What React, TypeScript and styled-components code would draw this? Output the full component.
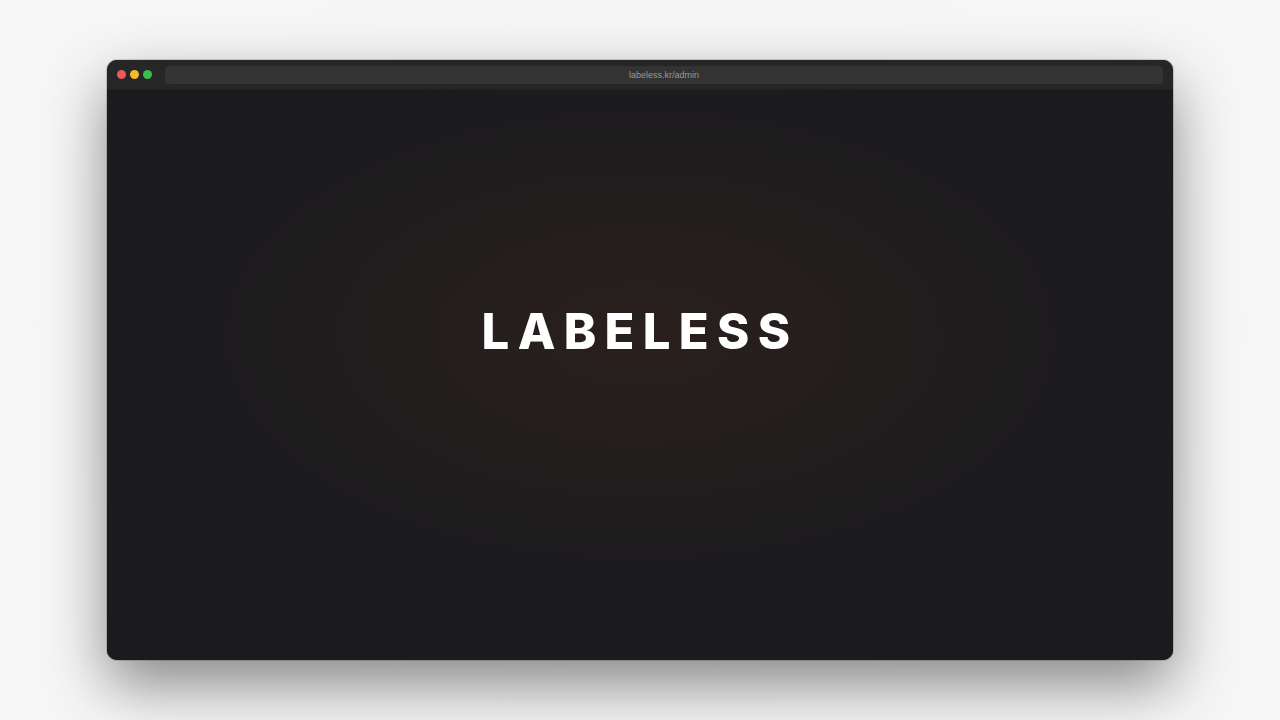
import React from "react";
import styled, { createGlobalStyle } from "styled-components";

const Global = createGlobalStyle`
  html, body { margin: 0; padding: 0; }
  body {
    width: 1280px;
    height: 720px;
    overflow: hidden;
    background: #f4f4f4;
    font-family: "Liberation Sans", Arial, sans-serif;
  }
`;

const Stage = styled.div`
  width: 1280px;
  height: 720px;
  display: flex;
  align-items: center;
  justify-content: center;
  background: radial-gradient(ellipse at 50% 45%, #f2f2f2 0%, #f6f6f6 70%);
`;

const Window = styled.div`
  width: 1066px;
  height: 600px;
  border-radius: 10px;
  overflow: hidden;
  display: flex;
  flex-direction: column;
  background: #1b1b1d;
  box-shadow: 0 25px 60px rgba(0, 0, 0, 0.45), 0 0 0 1px rgba(0, 0, 0, 0.15);
`;

const TitleBar = styled.div`
  height: 29px;
  flex: none;
  display: flex;
  align-items: center;
  padding: 0 10px 0 10px;
  background: #262627;
  border-bottom: 1px solid #202021;
`;

const Dots = styled.div`
  display: flex;
  gap: 4px;
  margin-right: 13px;
`;

const Dot = styled.span<{ $c: string }>`
  width: 9px;
  height: 9px;
  border-radius: 50%;
  background: ${(p) => p.$c};
`;

const Address = styled.div`
  flex: 1;
  height: 18px;
  border-radius: 4px;
  background: #333334;
  display: flex;
  align-items: center;
  justify-content: center;
  font-size: 9px;
  color: #9a9a9a;
  font-family: "Liberation Sans", Arial, sans-serif;
`;

const Body = styled.div`
  flex: 1;
  display: flex;
  align-items: center;
  justify-content: center;
  padding-bottom: 87px;
  background: radial-gradient(
    ellipse 520px 280px at 50% 43%,
    #2a201d 0%,
    #241e1d 35%,
    #1e1c1d 70%,
    #1b1b1d 100%
  );
`;

const Logo = styled.h1`
  margin: 0;
  font-family: Inter, "Liberation Sans", Arial, sans-serif;
  font-weight: 800;
  font-size: 49px;
  line-height: 1;
  letter-spacing: 0.17em;
  color: #ffffff;
`;

export default function App() {
  return (
    <>
      <Global />
      <Stage>
        <Window>
          <TitleBar>
            <Dots>
              <Dot $c="#ee5a5c" />
              <Dot $c="#f5b92d" />
              <Dot $c="#35c14a" />
            </Dots>
            <Address>labeless.kr/admin</Address>
          </TitleBar>
          <Body>
            <Logo>LABELESS</Logo>
          </Body>
        </Window>
      </Stage>
    </>
  );
}
